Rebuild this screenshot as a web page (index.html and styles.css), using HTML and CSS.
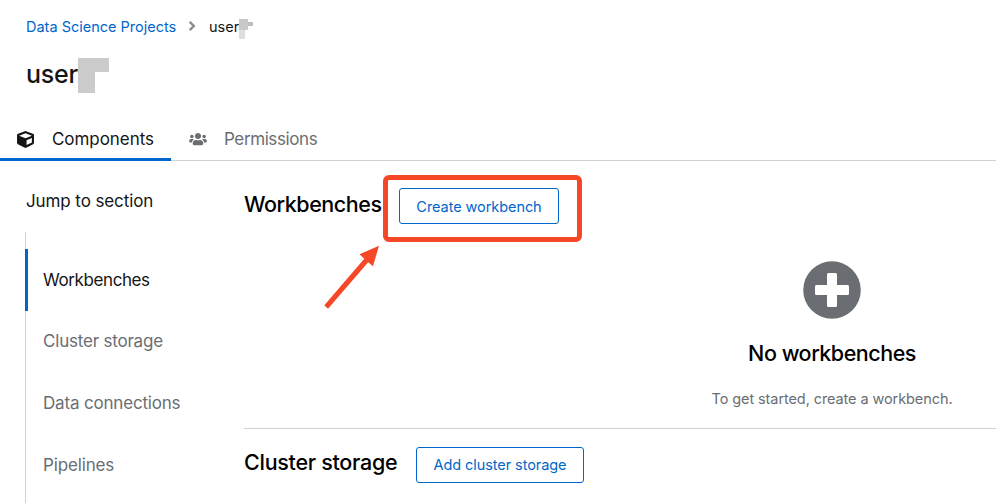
FILE: index.html
```html
<!DOCTYPE html>
<html lang="en">
<head>
<meta charset="utf-8">
<title>Data Science Projects</title>
<link rel="stylesheet" href="styles.css">
</head>
<body>
<header class="head">
  <nav class="crumbs">
    <a class="crumb-link">Data Science Projects</a>
    <svg class="chevron" viewBox="0 0 8 10"><path d="M1.700 .900 5.800 5 1.700 9.100" fill="none" stroke="#8a8d90" stroke-width="2.400"/></svg>
    <span class="crumb-current">user</span>
    <svg class="mask-small" viewBox="0 0 14 20"><path fill="#c8c8c8" d="M0 0h9v11H0z"/><path fill="#bdbdbd" d="M9 3h5v4H9z"/><path fill="#dedede" d="M0 11h6v9H0z"/></svg>
  </nav>
  <div class="title-row">
    <h1 class="title">user</h1>
    <svg class="mask-large" viewBox="0 0 31 35"><path fill="#cbcbcb" d="M0 0h31v14H17v21H0z"/></svg>
  </div>
</header>
<nav class="tabs">
  <a class="tab tab-active">
    <svg class="tab-icon" viewBox="0 0 512 512"><path fill="currentColor" d="M239.1 6.3l-208 78c-18.7 7-31.1 25-31.1 45v225.1c0 18.2 10.3 34.8 26.5 42.9l208 104c13.5 6.8 29.4 6.8 42.9 0l208-104c16.3-8.1 26.5-24.8 26.5-42.9V129.300c0-20-12.400-37.900-31.100-44.900l-208-78C262 2.200 250 2.200 239.100 6.300zM256 68.400l192 72v1.100l-192 78-192-78v-1.100l192-72zm32 356V275.500l160-65v133.900l-160 80z"/></svg>
    <span class="tab-text components">Components</span>
  </a>
  <a class="tab">
    <svg class="tab-icon users" viewBox="0 0 640 512"><path fill="currentColor" d="M96 224c35.300 0 64-28.700 64-64s-28.700-64-64-64-64 28.700-64 64 28.700 64 64 64zm448 0c35.300 0 64-28.700 64-64s-28.700-64-64-64-64 28.700-64 64 28.700 64 64 64zm32 32h-64c-17.600 0-33.500 7.100-45.100 18.600 40.300 22.100 68.900 62 75.100 109.400h66c17.700 0 32-14.300 32-32v-32c0-35.300-28.700-64-64-64zm-256 0c61.900 0 112-50.100 112-112S381.900 32 320 32 208 82.100 208 144s50.100 112 112 112zm76.800 32h-8.300c-20.800 10-43.900 16-68.500 16s-47.600-6-68.500-16h-8.300C179.600 288 128 339.600 128 403.200V432c0 26.500 21.500 48 48 48h288c26.500 0 48-21.500 48-48v-28.800c0-63.600-51.600-115.200-115.200-115.200zm-223.700-13.400C161.500 263.100 145.600 256 128 256H64c-35.300 0-64 28.700-64 64v32c0 17.700 14.300 32 32 32h65.900c6.300-47.400 34.900-87.300 75.200-109.400z"/></svg>
    <span class="tab-text permissions">Permissions</span>
  </a>
</nav>
<div class="layout">
  <aside class="side">
    <div class="jump">Jump to section</div>
    <ul class="links">
      <li class="link link-active"><span class="link-workbenches">Workbenches</span></li>
      <li class="link"><span class="link-storage">Cluster storage</span></li>
      <li class="link"><span class="link-data">Data connections</span></li>
      <li class="link"><span class="link-pipelines">Pipelines</span></li>
    </ul>
  </aside>
  <main class="main">
    <section class="workbenches">
      <div class="section-head">
        <h2 class="h2 h-work">Workbenches</h2>
        <button class="btn btn-create">Create workbench</button>
      </div>
      <div class="empty">
        <svg class="plus" viewBox="0 0 58 58"><circle cx="29" cy="29" r="28.800" fill="#6a6e73"/><path fill="#fff" d="M25.500 12h7q1.500 0 1.500 1.500V24h10.500q1.500 0 1.500 1.500v7q0 1.500-1.500 1.500H34v10.500q0 1.500-1.500 1.500h-7q-1.500 0-1.500-1.500V34H13.500q-1.500 0-1.500-1.500v-7q0-1.500 1.500-1.500H24V13.500q0-1.500 1.500-1.500z"/></svg>
        <h3 class="empty-title">No workbenches</h3>
        <p class="empty-text">To get started, create a workbench.</p>
      </div>
    </section>
    <section class="section-head storage">
      <h2 class="h2 h-storage">Cluster storage</h2>
      <button class="btn btn-add">Add cluster storage</button>
    </section>
  </main>
</div>
<div class="highlight"></div>
<svg class="arrow" viewBox="0 0 60 68"><path fill="#f64826" d="M59 .7 53 21.300 48.200 17.300 8 63.700 4.300 60.300 44.300 13.800 39.500 9.300z"/></svg>
</body>
</html>
```
FILE: styles.css
```css
* { box-sizing: border-box; }
body {
  margin: 0;
  width: 996px;
  height: 503px;
  overflow: hidden;
  background: #fff;
  color: #151515;
  font-family: Inter, "Liberation Sans", sans-serif;
  font-size: 16px;
  position: relative;
}
h1, h2, h3, p, ul { margin: 0; padding: 0; font-weight: 500; }
a, span, h1, h2, h3, p { white-space: nowrap; }
.head { height: 118px; padding: 16px 0 0 26px; }
.crumbs { display: flex; align-items: center; height: 20px; font-size: 14.5px; }
.crumb-link { color: #06c; width: 151px; }
.chevron { width: 8px; height: 10px; margin: 0 13px 0 11px; }
.crumb-current { width: 30px; }
.mask-small { width: 14px; height: 20px; margin-top: 5px; }
.title-row { display: flex; margin-top: 20px; height: 36px; align-items: center; }
.title { font-size: 25px; line-height: 36px; width: 52px; letter-spacing: -0.2px; }
.mask-large { width: 31px; height: 35px; margin-top: 2px; }
.tabs { display: flex; height: 43px; border-bottom: 1px solid #d2d2d2; }
.tab { display: flex; align-items: center; height: 43px; padding-left: 17px; color: #6a6e73; }
.tab-active { width: 171px; border-bottom: 3px solid #06c; color: #151515; padding-top: 2px; }
.tab:not(.tab-active) { padding: 0 0 1px 18px; }
.tab-icon { width: 17px; height: 17px; margin-right: 18px; }
.users { width: 18px; height: 14px; margin-right: 17px; }
.tab-text { font-size: 17px; }
.components { letter-spacing: -0.05px; }
.permissions { letter-spacing: -0.4px; }
.layout { display: flex; height: 342px; }
.side { width: 244px; flex: none; padding: 28px 0 0 25px; }
.jump { height: 24px; line-height: 24px; font-size: 17px; padding-left: 1px; white-space: nowrap; letter-spacing: -0.1px; }
.links { list-style: none; margin-top: 19px; border-left: 1px solid #d2d2d2; padding-top: 17px; height: 290px; }
.link { height: 61.8px; margin-left: -1px; padding-left: 18px; display: flex; align-items: center; font-size: 17px; font-weight: 400; color: #6a6e73; }
.link-active { color: #151515; border-left: 3px solid #06c; padding-left: 15px; }
.link-workbenches { letter-spacing: -0.4px; }
.link-storage { letter-spacing: -0.2px; padding-bottom: 1px; }
.link-data { letter-spacing: -0.18px; }
.link-pipelines { letter-spacing: -0.15px; }
.main { width: 752px; flex: none; color: #000; }
.workbenches { height: 268px; padding-top: 27px; border-bottom: 1px solid #d2d2d2; }
.section-head { display: flex; align-items: flex-start; }
.h2 { font-size: 21.5px; line-height: 32px; }
.h-work { width: 155px; letter-spacing: -0.45px; }
.h-storage { width: 172px; letter-spacing: -0.28px; margin-top: -1px; }
.btn { height: 36px; padding: 2px 0 0; border: 1px solid #06c; border-radius: 3px; background: #fff; color: #06c; font: 14.5px/32px Inter, "Liberation Sans", sans-serif; letter-spacing: -0.07px; }
.btn-create { width: 160px; }
.btn-add { width: 168px; padding-top: 0; }
.empty { width: 300px; margin: 37px 0 0 438px; display: flex; flex-direction: column; align-items: center; }
.plus { width: 58px; height: 58px; }
.empty-title { margin-top: 18px; font-size: 21.5px; line-height: 32px; letter-spacing: -0.48px; }
.empty-text { margin-top: 18px; font-size: 14.5px; line-height: 24px; font-weight: 400; color: #6a6e73; letter-spacing: -0.09px; }
.storage { padding-top: 18px; }
.highlight { position: absolute; left: 383px; top: 175px; width: 199px; height: 67px; border: 5px solid #f64826; border-radius: 6px; }
.arrow { position: absolute; left: 320px; top: 245px; width: 60px; height: 68px; }
```
